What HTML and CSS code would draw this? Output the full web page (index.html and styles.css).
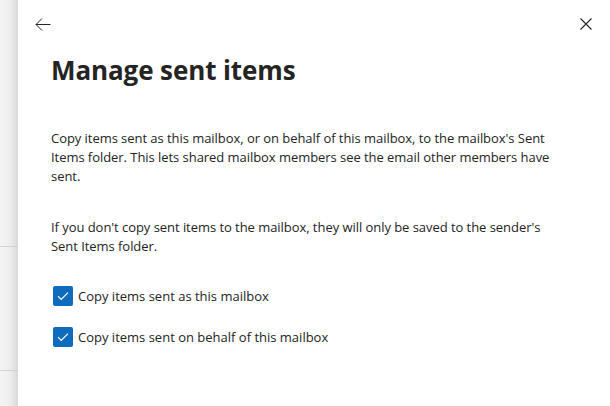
FILE: index.html
```html
<!DOCTYPE html>
<html lang="en">
<head>
    <meta charset="UTF-8">
    <title>Manage sent items</title>
    <link rel="stylesheet" href="styles.css">
</head>
<body>
    <!-- page behind the panel -->
    <div class="backdrop">
        <div class="backdrop-row first"></div>
        <div class="backdrop-row second"></div>
    </div>

    <!-- panel -->
    <section class="panel">
        <div class="panel-top">
            <button class="icon-btn" aria-label="Back">
                <svg width="16" height="16" viewBox="0 0 16 16"><path d="M15.5 8.5H1M7 2.5L1 8.5l6 6" fill="none" stroke="#242424" stroke-width="1"/></svg>
            </button>
            <button class="icon-btn" aria-label="Close">
                <svg width="14" height="14" viewBox="0 0 14 14"><path d="M1.5 1.5l11 11M12.5 1.5l-11 11" fill="none" stroke="#242424" stroke-width="1.1"/></svg>
            </button>
        </div>

        <div class="panel-body">
            <h1 class="title">Manage sent items</h1>

            <p class="text">Copy items sent as this mailbox, or on behalf of this mailbox, to the mailbox's Sent Items folder. This lets shared mailbox members see the email other members have sent.</p>
            <p class="text">If you don't copy sent items to the mailbox, they will only be saved to the sender's Sent Items folder.</p>

            <div class="options">
                <label class="check">
                    <span class="box"><svg width="14" height="14" viewBox="0 0 14 14"><path d="M2 7.2l3.2 3.2L12 3.6" fill="none" stroke="#fff" stroke-width="1.2"/></svg></span>
                    Copy items sent as this mailbox
                </label>
                <label class="check">
                    <span class="box"><svg width="14" height="14" viewBox="0 0 14 14"><path d="M2 7.2l3.2 3.2L12 3.6" fill="none" stroke="#fff" stroke-width="1.2"/></svg></span>
                    Copy items sent on behalf of this mailbox
                </label>
            </div>
        </div>
    </section>
</body>
</html>
```

FILE: styles.css
```css
* {
    margin: 0;
    padding: 0;
    box-sizing: border-box;
}

body {
    display: flex;
    width: 610px;
    height: 406px;
    overflow: hidden;
    font-family: 'Open Sans', 'Noto Sans', sans-serif;
    color: #242424;
    background: #fff;
}

/* backdrop strip */
.backdrop {
    width: 18px;
    flex-shrink: 0;
    background: linear-gradient(to right, #f4f4f4 0%, #eeeeee 55%, #d9d9d9 100%);
    display: flex;
    flex-direction: column;
}

.backdrop-row.first {
    height: 247px;
    border-bottom: 1px solid #d2d2d2;
}

.backdrop-row.second {
    height: 124px;
    border-bottom: 1px solid #d2d2d2;
}

/* panel */
.panel {
    flex: 1;
    background: #fff;
    padding: 0 15px 0 16px;
}

.panel-top {
    display: flex;
    justify-content: space-between;
    align-items: center;
    height: 48px;
}

.icon-btn {
    background: none;
    border: none;
    width: 18px;
    height: 18px;
    display: flex;
    align-items: center;
    justify-content: center;
}

.panel-body {
    padding: 0 29px 0 17px;
}

.title {
    font-size: 26px;
    font-weight: 700;
    line-height: 36px;
    margin-top: 4px;
    letter-spacing: -0.1px;
}

.text {
    font-size: 13px;
    line-height: 19px;
    letter-spacing: -0.05px;
    margin-top: 41px;
}

.text + .text {
    margin-top: 32px;
}

.options {
    margin-top: 30px;
    display: flex;
    flex-direction: column;
    gap: 21px;
}

.check {
    display: flex;
    align-items: center;
    font-size: 13px;
    line-height: 20px;
    margin-left: 2px;
}

.box {
    width: 20px;
    height: 20px;
    background: #0f6cbd;
    border-radius: 2px;
    display: flex;
    align-items: center;
    justify-content: center;
    margin-right: 5px;
}
```
